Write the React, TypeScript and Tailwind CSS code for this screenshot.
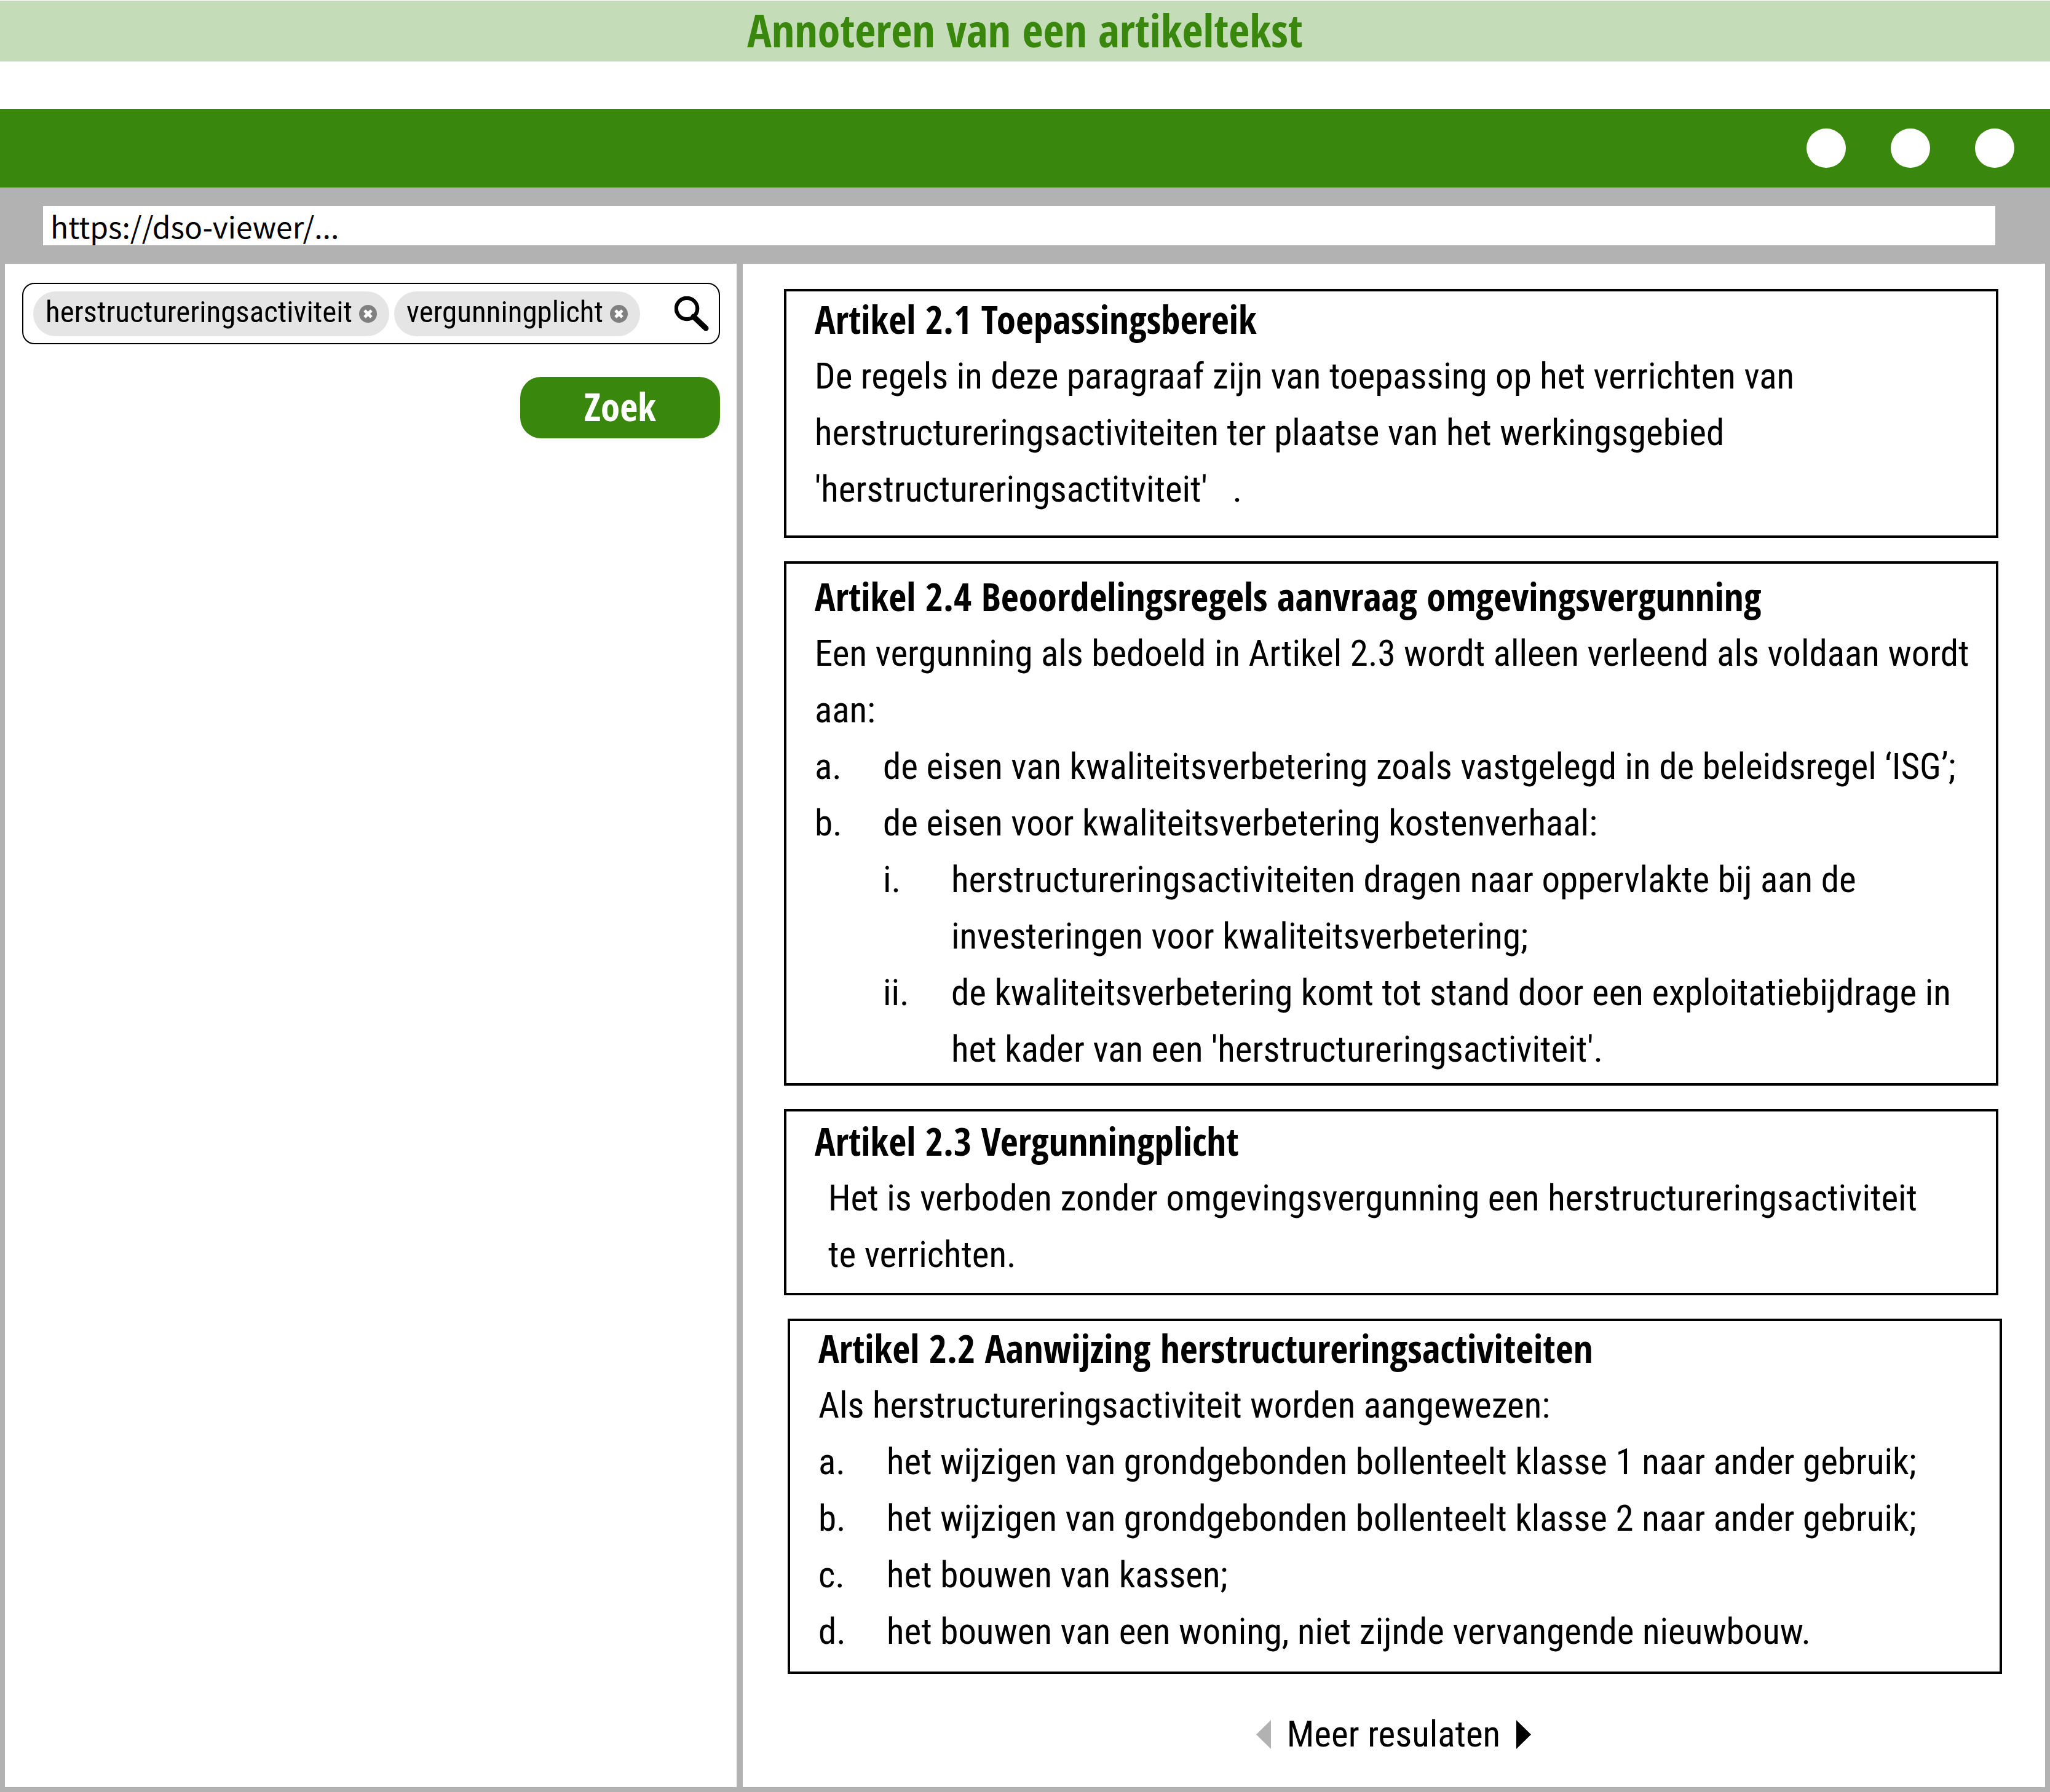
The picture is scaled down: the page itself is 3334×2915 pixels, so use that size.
import React from "react";

const BODY = "font-['Myriad_Pro_Condensed','Roboto_Condensed','Roboto',sans-serif]";
const HEADING = "font-['Myriad_Pro_Condensed','Open_Sans_Condensed','Open_Sans',sans-serif] font-bold";

function Chip({ label }: { label: string }) {
  return (
    <li className="flex h-[73px] items-center gap-[11px] rounded-full bg-[#e5e5e5] px-5">
      <span className="pb-1 text-[49px] leading-[60px]">{label}</span>
      <button type="button" aria-label={`Verwijder ${label}`} className="block size-[29px]">
        <svg viewBox="0 0 29 29" className="size-full">
          <circle cx="14.5" cy="14.5" r="14.5" fill="#808080" />
          <path d="M9 9l11 11M20 9L9 20" stroke="#fff" strokeWidth="5" />
        </svg>
      </button>
    </li>
  );
}

function Item({ marker, children }: { marker: string; children: React.ReactNode }) {
  return (
    <li className="flex">
      <span className="w-[111px] shrink-0">{marker}</span>
      <div>{children}</div>
    </li>
  );
}

function Article({ title, className, children }: { title: string; className: string; children: React.ReactNode }) {
  return (
    <article className={`border-4 border-black pr-5 pl-[46px] ${className}`}>
      <h2 className={`mb-[7px] text-[63px] leading-[80px] ${HEADING}`}>{title}</h2>
      {children}
    </article>
  );
}

export default function App() {
  return (
    <div className={`bg-white text-black ${BODY}`}>
      <h1 className={`mt-px flex h-[99px] items-center justify-center bg-[#c5dcb9] pb-1 text-[74px] leading-[90px] text-[#39870d] ${HEADING}`}>
        Annoteren van een artikeltekst
      </h1>

      <div className="mt-[77px]">
        <header>
          <div className="flex h-32 items-center justify-end gap-[73px] bg-[#39870d] pr-[58px]">
            <span className="size-16 rounded-full bg-white" />
            <span className="size-16 rounded-full bg-white" />
            <span className="size-16 rounded-full bg-white" />
          </div>
          <div className="flex h-[124px] items-center bg-[#b2b2b2] pr-[89px] pl-[70px]">
            <input
              type="text"
              aria-label="Adres"
              defaultValue="https://dso-viewer/..."
              className="h-16 w-full min-w-0 bg-white px-3 font-['Myriad_Pro','Noto_Sans_CJK_JP',sans-serif] text-[48px] leading-[64px] outline-none"
            />
          </div>
        </header>

        <div className="grid grid-cols-[minmax(0,1200fr)_minmax(0,2118fr)] border-x-8 border-b-8 border-[#b2b2b2]">
          <aside className="border-r-10 border-[#b2b2b2]">
            <form className="pt-[31px] pr-[27px] pl-7" onSubmit={(e) => e.preventDefault()}>
              <div className="flex h-[100px] items-center justify-between rounded-[20px] border-2 border-black pr-4 pl-4">
                <ul className="flex gap-2">
                  <Chip label="herstructureringsactiviteit" />
                  <Chip label="vergunningplicht" />
                </ul>
                <button type="button" aria-label="Zoeken" className="block size-14">
                  <svg viewBox="0 0 56 56" className="size-full" fill="none" stroke="#000">
                    <circle cx="20" cy="20" r="17.2" strokeWidth="6.2" />
                    <path d="M31 33L51 52" strokeWidth="9" strokeLinecap="round" />
                  </svg>
                </button>
              </div>
              <button
                type="submit"
                className={`mt-[53px] ml-auto flex h-[100px] w-[325px] items-center justify-center rounded-[34px] bg-[#39870d] pb-1 text-[63px] leading-[80px] text-white ${HEADING}`}
              >
                Zoek
              </button>
            </form>
          </aside>

          <main className="pt-[41px] pr-[76px] pb-10 pl-[67px] text-[59px] leading-[92px]">
            <div className="flex flex-col gap-[38px]">
              <Article title="Artikel 2.1 Toepassingsbereik" className="pt-[5px] pb-[29px]">
                <p>
                  De regels in deze paragraaf zijn van toepassing op het verrichten van
                  <br />
                  herstructureringsactiviteiten ter plaatse van het werkingsgebied
                  <br />
                  'herstructureringsactitviteit'&nbsp;&nbsp;&nbsp;.
                </p>
              </Article>

              <Article title="Artikel 2.4 Beoordelingsregels aanvraag omgevingsvergunning" className="pt-[13px] pb-[9px]">
                <p>
                  Een vergunning als bedoeld in Artikel 2.3 wordt alleen verleend als voldaan wordt
                  <br />
                  aan:
                </p>
                <ol>
                  <Item marker="a.">de eisen van kwaliteitsverbetering zoals vastgelegd in de beleidsregel ‘ISG’;</Item>
                  <Item marker="b.">
                    de eisen voor kwaliteitsverbetering kostenverhaal:
                    <ol>
                      <Item marker="i.">
                        herstructureringsactiviteiten dragen naar oppervlakte bij aan de
                        <br />
                        investeringen voor kwaliteitsverbetering;
                      </Item>
                      <Item marker="ii.">
                        de kwaliteitsverbetering komt tot stand door een exploitatiebijdrage in
                        <br />
                        het kader van een 'herstructureringsactiviteit'.
                      </Item>
                    </ol>
                  </Item>
                </ol>
              </Article>

              <Article title="Artikel 2.3 Vergunningplicht" className="pt-2 pb-4">
                <p className="pl-[22px]">
                  Het is verboden zonder omgevingsvergunning een herstructureringsactiviteit
                  <br />
                  te verrichten.
                </p>
              </Article>

              <Article title="Artikel 2.2 Aanwijzing herstructureringsactiviteiten" className="-mr-1.5 ml-1.5 pt-1 pb-[19px]">
                <p>Als herstructureringsactiviteit worden aangewezen:</p>
                <ol>
                  <Item marker="a.">het wijzigen van grondgebonden bollenteelt klasse 1 naar ander gebruik;</Item>
                  <Item marker="b.">het wijzigen van grondgebonden bollenteelt klasse 2 naar ander gebruik;</Item>
                  <Item marker="c.">het bouwen van kassen;</Item>
                  <Item marker="d.">het bouwen van een woning, niet zijnde vervangende nieuwbouw.</Item>
                </ol>
              </Article>
            </div>

            <nav aria-label="Resultaten" className="mt-[52px] flex items-center justify-center gap-[26px] pl-2">
              <button type="button" aria-label="Vorige" disabled className="block h-[47px] w-6">
                <svg viewBox="0 0 24 47" className="size-full">
                  <path d="M24 0V47L0 23.5z" fill="#b2b2b2" />
                </svg>
              </button>
              <span>Meer resulaten</span>
              <button type="button" aria-label="Volgende" className="block h-[47px] w-6">
                <svg viewBox="0 0 24 47" className="size-full">
                  <path d="M0 0V47L24 23.5z" fill="#000" />
                </svg>
              </button>
            </nav>
          </main>
        </div>
      </div>
    </div>
  );
}
